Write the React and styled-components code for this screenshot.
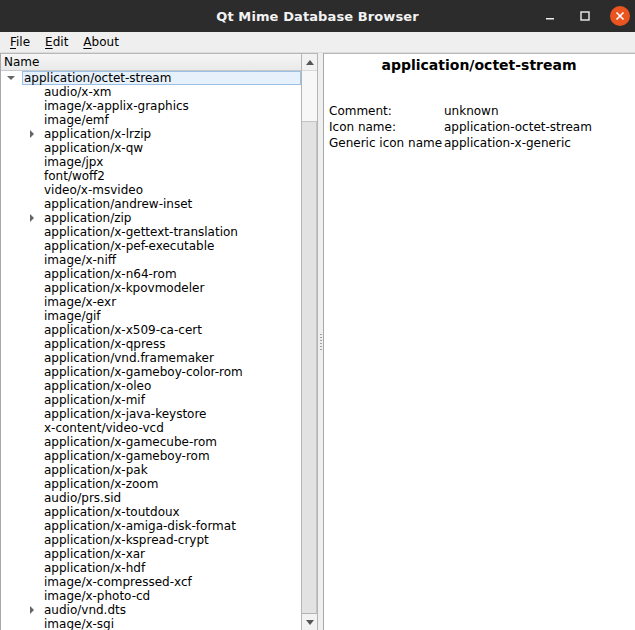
import React from 'react';
import styled, { createGlobalStyle } from 'styled-components';

const GlobalStyle = createGlobalStyle`
  html, body { margin: 0; padding: 0; }
  body {
    width: 635px;
    height: 630px;
    overflow: hidden;
    font-family: "DejaVu Sans", "Liberation Sans", sans-serif;
    font-size: 12px;
    color: #000;
    background: #efefef;
  }
`;

const Window = styled.div`
  width: 635px;
  height: 630px;
  display: flex;
  flex-direction: column;
  background: #efefef;
  overflow: hidden;
`;

const TitleBar = styled.div`
  height: 32px;
  flex: none;
  background: #2c2c2c;
  display: flex;
  align-items: center;
  justify-content: center;
  position: relative;
  color: #f2f2f2;
  font-weight: bold;
  font-size: 13px;
  letter-spacing: 0.1px;
`;

const Controls = styled.div`
  position: absolute;
  right: 5px;
  top: 0;
  height: 32px;
  display: flex;
  align-items: center;
  gap: 15px;
`;

const CtrlBtn = styled.div`
  width: 20px;
  height: 20px;
  display: flex;
  align-items: center;
  justify-content: center;
  border-radius: 50%;
  background: ${p => (p.$close ? '#e95420' : 'transparent')};
`;

const MenuBar = styled.div`
  height: 20px;
  flex: none;
  display: flex;
  align-items: center;
  padding-left: 10px;
  gap: 15px;
  background: #efefef;
  font-size: 12px;
  border-bottom: 1px solid #dcdcdc;
`;

const MenuItem = styled.span`
  u { text-decoration: underline; text-underline-offset: 2px; }
`;

const Body = styled.div`
  flex: 1;
  display: flex;
  min-height: 0;
`;

const TreePane = styled.div`
  width: 317px;
  flex: none;
  display: flex;
  border-left: 1px solid #a8a8a8;
  border-top: 1px solid #b8b8b8;
  background: #fff;
  box-sizing: border-box;
`;

const TreeMain = styled.div`
  flex: 1;
  display: flex;
  flex-direction: column;
  min-width: 0;
`;

const Header = styled.div`
  height: 16px;
  flex: none;
  background: linear-gradient(#f6f6f6, #e9e9e9);
  border-bottom: 1px solid #c8c8c8;
  padding-left: 3px;
  line-height: 16px;
`;

const Rows = styled.div`
  flex: 1;
  overflow: hidden;
`;

const Row = styled.div`
  height: 14px;
  display: flex;
  align-items: center;
  position: relative;
  padding-left: ${p => p.$indent}px;
  white-space: nowrap;
`;

const Arrow = styled.span`
  position: absolute;
  left: ${p => p.$x}px;
  width: 0;
  height: 0;
  ${p => p.$open
    ? `border-left: 4px solid transparent; border-right: 4px solid transparent; border-top: 4px solid #666; top: 5px;`
    : `border-top: 4px solid transparent; border-bottom: 4px solid transparent; border-left: 4px solid #666; top: 3px;`}
`;

const Label = styled.span`
  line-height: 14px;
  height: 14px;
  padding: 0 2px;
  ${p => p.$selected && `
    flex: 1;
    background: #e6f1fb;
    border: 1px solid #9cc0e4;
    height: 12px;
    line-height: 12px;
    padding: 0 1px;
  `}
`;

const ScrollBar = styled.div`
  width: 15px;
  flex: none;
  display: flex;
  flex-direction: column;
  border-left: 1px solid #b4b4b4;
  background: #f4f4f4;
`;

const ScrollBtn = styled.div`
  height: 16px;
  flex: none;
  display: flex;
  align-items: center;
  justify-content: center;
  background: #f2f2f2;
  border-bottom: ${p => (p.$down ? 'none' : '1px solid #d8d8d8')};
  border-top: ${p => (p.$down ? '1px solid #b4b4b4' : 'none')};
`;

const Track = styled.div`
  flex: 1;
  display: flex;
  flex-direction: column;
  padding-top: 50px;
  background: #f7f7f7;
`;

const Thumb = styled.div`
  flex: 1;
  background: #e2e2e2;
  border-top: 1px solid #c4c4c4;
  border-right: 1px solid #c4c4c4;
`;

const Splitter = styled.div`
  width: 5px;
  flex: none;
  background: #efefef;
  border-left: 1px solid #b4b4b4;
  display: flex;
  flex-direction: column;
  align-items: center;
  justify-content: center;
  gap: 2px;
`;

const Dot = styled.span`
  width: 2px;
  height: 1px;
  background: #a0a0a0;
`;

const DetailPane = styled.div`
  flex: 1;
  background: #fff;
  border-left: 1px solid #a8a8a8;
  border-top: 1px solid #b8b8b8;
  padding: 2px 6px 0 5px;
`;

const DetailTitle = styled.div`
  text-align: center;
  font-weight: bold;
  font-size: 14px;
  line-height: 18px;
`;

const Props = styled.div`
  margin-top: 30px;
  display: grid;
  grid-template-columns: 115px 1fr;
  row-gap: 2px;
  line-height: 14px;
`;

const items = [
  'audio/x-xm',
  'image/x-applix-graphics',
  'image/emf',
  ['application/x-lrzip'],
  'application/x-qw',
  'image/jpx',
  'font/woff2',
  'video/x-msvideo',
  'application/andrew-inset',
  ['application/zip'],
  'application/x-gettext-translation',
  'application/x-pef-executable',
  'image/x-niff',
  'application/x-n64-rom',
  'application/x-kpovmodeler',
  'image/x-exr',
  'image/gif',
  'application/x-x509-ca-cert',
  'application/x-qpress',
  'application/vnd.framemaker',
  'application/x-gameboy-color-rom',
  'application/x-oleo',
  'application/x-mif',
  'application/x-java-keystore',
  'x-content/video-vcd',
  'application/x-gamecube-rom',
  'application/x-gameboy-rom',
  'application/x-pak',
  'application/x-zoom',
  'audio/prs.sid',
  'application/x-toutdoux',
  'application/x-amiga-disk-format',
  'application/x-kspread-crypt',
  'application/x-xar',
  'application/x-hdf',
  'image/x-compressed-xcf',
  'image/x-photo-cd',
  ['audio/vnd.dts'],
  'image/x-sgi',
];

const App = () => (
  <Window>
    <GlobalStyle />
    <TitleBar>
      Qt Mime Database Browser
      <Controls>
        <CtrlBtn>
          <svg width="10" height="10" viewBox="0 0 10 10"><rect x="1" y="7" width="8" height="1.5" fill="#eee" /></svg>
        </CtrlBtn>
        <CtrlBtn>
          <svg width="10" height="10" viewBox="0 0 10 10"><rect x="1" y="1" width="8" height="8" fill="none" stroke="#eee" strokeWidth="1.4" /></svg>
        </CtrlBtn>
        <CtrlBtn $close>
          <svg width="10" height="10" viewBox="0 0 10 10"><path d="M1.5 1.5 L8.5 8.5 M8.5 1.5 L1.5 8.5" stroke="#fff" strokeWidth="1.6" /></svg>
        </CtrlBtn>
      </Controls>
    </TitleBar>
    <MenuBar>
      <MenuItem><u>F</u>ile</MenuItem>
      <MenuItem><u>E</u>dit</MenuItem>
      <MenuItem><u>A</u>bout</MenuItem>
    </MenuBar>
    <Body>
      <TreePane>
        <TreeMain>
          <Header>Name</Header>
          <Rows>
            <Row $indent={21}>
              <Arrow $x={6} $open />
              <Label $selected>application/octet-stream</Label>
            </Row>
            {items.map((it, i) => {
              const branch = Array.isArray(it);
              const name = branch ? it[0] : it;
              return (
                <Row key={i} $indent={41}>
                  {branch && <Arrow $x={29} />}
                  <Label>{name}</Label>
                </Row>
              );
            })}
          </Rows>
        </TreeMain>
        <ScrollBar>
          <ScrollBtn>
            <svg width="8" height="5" viewBox="0 0 8 5"><path d="M0 5 L4 0 L8 5 Z" fill="#555" /></svg>
          </ScrollBtn>
          <Track><Thumb /></Track>
          <ScrollBtn $down>
            <svg width="8" height="5" viewBox="0 0 8 5"><path d="M0 0 L8 0 L4 5 Z" fill="#555" /></svg>
          </ScrollBtn>
        </ScrollBar>
      </TreePane>
      <Splitter>
        {[0, 1, 2, 3, 4, 5].map(i => <Dot key={i} />)}
      </Splitter>
      <DetailPane>
        <DetailTitle>application/octet-stream</DetailTitle>
        <Props>
          <span>Comment:</span><span>unknown</span>
          <span>Icon name:</span><span>application-octet-stream</span>
          <span>Generic icon name</span><span>application-x-generic</span>
        </Props>
      </DetailPane>
    </Body>
  </Window>
);

export default App;
